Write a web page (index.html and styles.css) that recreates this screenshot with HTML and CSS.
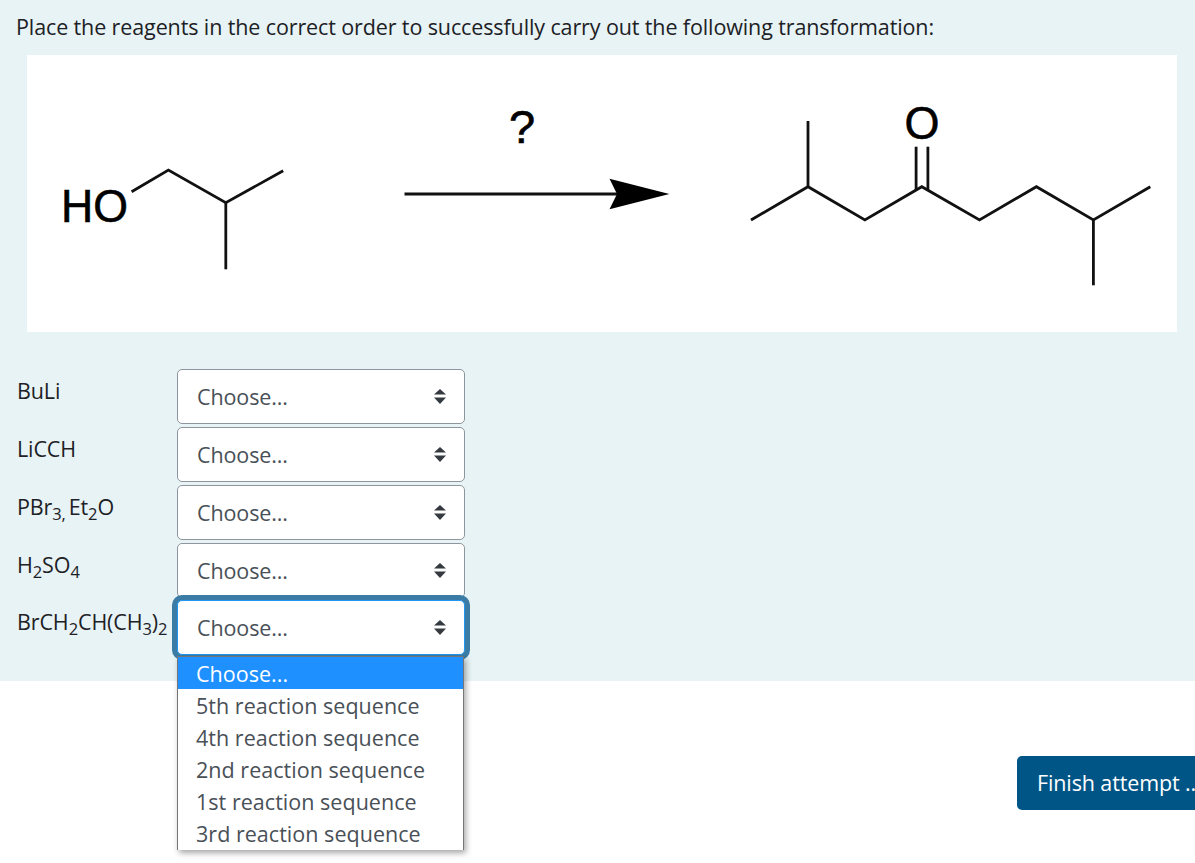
FILE: index.html
```html
<!DOCTYPE html>
<html lang="en">

<head>
    <meta charset="UTF-8">
    <title>Place the reagents</title>
    <link rel="stylesheet" href="styles.css">
</head>

<body>
    <div class="que">
        <p class="qtext">Place the reagents in the correct order to successfully carry out the following transformation:</p>

        <div class="pic">
            <svg class="scheme" viewBox="27 55 1150 277" width="1150" height="277">
                <text class="atom" x="61" y="222" textLength="67" lengthAdjust="spacingAndGlyphs">HO</text>
                <polyline class="bond" points="131.6,191.7 168.4,170 225.8,202.7 283.2,170.7"></polyline>
                <line class="bond" x1="225.8" y1="202.7" x2="225.8" y2="269.3"></line>

                <text class="atom" x="509" y="143">?</text>
                <line class="bond" x1="404.5" y1="194" x2="620" y2="194"></line>
                <polygon class="head" points="669.4,194 609.5,178.7 617,194 609.5,209.3"></polygon>

                <text class="atom" x="904.5" y="139" textLength="35" lengthAdjust="spacingAndGlyphs">O</text>
                <polyline class="bond" points="751,220 808,186.7 864.9,220 921.8,186.7 979.5,220 1036.4,186.7 1093.4,220 1150.3,186.7"></polyline>
                <line class="bond" x1="808" y1="186.7" x2="808" y2="121"></line>
                <line class="bond" x1="1093.4" y1="220" x2="1093.4" y2="285.3"></line>
                <line class="bond" x1="916.1" y1="190" x2="916.1" y2="146.7"></line>
                <line class="bond" x1="927.9" y1="190" x2="927.9" y2="146.7"></line>
            </svg>
        </div>

        <div class="rows">
            <div class="row">
                <div class="lbl">BuLi</div>
                <div class="sel">Choose...
                    <svg class="updown" viewBox="0 0 12 15"><path d="M6 0L0 5.5h12zM6 15L0 8.5h12z"></path></svg>
                </div>
            </div>
            <div class="row">
                <div class="lbl">LiCCH</div>
                <div class="sel">Choose...
                    <svg class="updown" viewBox="0 0 12 15"><path d="M6 0L0 5.5h12zM6 15L0 8.5h12z"></path></svg>
                </div>
            </div>
            <div class="row">
                <div class="lbl">PBr<sub>3,</sub> Et<sub>2</sub>O</div>
                <div class="sel">Choose...
                    <svg class="updown" viewBox="0 0 12 15"><path d="M6 0L0 5.5h12zM6 15L0 8.5h12z"></path></svg>
                </div>
            </div>
            <div class="row">
                <div class="lbl">H<sub>2</sub>SO<sub>4</sub></div>
                <div class="sel">Choose...
                    <svg class="updown" viewBox="0 0 12 15"><path d="M6 0L0 5.5h12zM6 15L0 8.5h12z"></path></svg>
                </div>
            </div>
            <div class="row last">
                <div class="lbl">BrCH<sub>2</sub>CH(CH<sub>3</sub>)<sub>2</sub></div>
                <div class="sel open">Choose...
                    <svg class="updown" viewBox="0 0 12 15"><path d="M6 0L0 5.5h12zM6 15L0 8.5h12z"></path></svg>
                    <ul class="menu">
                        <li class="on">Choose...</li>
                        <li>5th reaction sequence</li>
                        <li>4th reaction sequence</li>
                        <li>2nd reaction sequence</li>
                        <li>1st reaction sequence</li>
                        <li>3rd reaction sequence</li>
                    </ul>
                </div>
            </div>
        </div>
    </div>

    <div class="foot">
        <button class="btn" type="button">Finish attempt ...</button>
    </div>
</body>

</html>
```

FILE: styles.css
```css
html,
body {
    height: 863px;
    overflow: hidden;
}

body {
    margin: 0;
    background: #fff;
    color: #1d2125;
    font-family: "Open Sans", "Noto Sans", sans-serif;
    font-size: 21.5px;
    letter-spacing: -0.115px;
}

/* question panel */
.que {
    height: 681px;
    padding: 10px 16px 0;
    box-sizing: border-box;
    background: #e7f3f5;
}

.qtext {
    margin: 0;
    height: 34px;
    line-height: 34px;
}

/* reaction picture */
.pic {
    width: 1150px;
    height: 277px;
    margin: 11px 0 0 11px;
    background: #fff;
}

.scheme {
    display: block;
}

.atom {
    font-family: "Liberation Sans", sans-serif;
    font-size: 47px;
    letter-spacing: 0;
    fill: #000;
    stroke: #000;
    stroke-width: 0.6;
}

.bond {
    fill: none;
    stroke: #111;
    stroke-width: 2.8;
}

.head {
    fill: #000;
}

/* reagent rows */
.rows {
    margin-top: 37px;
}

.row {
    display: flex;
    height: 58px;
}

.row.last {
    margin-top: -1px;
}

.lbl {
    width: 160px;
    padding-left: 1px;
    line-height: 44px;
    word-spacing: -2.5px;
    white-space: nowrap;
}

.lbl sub {
    font-size: 16.5px;
    line-height: 0;
}

.sel {
    position: relative;
    display: flex;
    align-items: center;
    justify-content: space-between;
    box-sizing: border-box;
    width: 288px;
    height: 55px;
    padding: 0 18px 0 19px;
    background: #fff;
    border: 1px solid #8f959e;
    border-radius: 5px;
    color: #495057;
}

.updown {
    width: 12px;
    height: 15px;
    fill: #343a40;
}

/* focused one */
.sel.open {
    border-color: #2196f3;
    box-shadow: 0 0 0 5px #3a7ca5;
}

/* open list over the page */
.menu {
    position: absolute;
    top: 55px;
    left: -1px;
    width: 287px;
    height: 194px;
    margin: 0;
    padding: 0;
    box-sizing: border-box;
    list-style: none;
    overflow: hidden;
    background: #fff;
    border: 1px solid #767676;
    border-bottom: 0;
    box-shadow: 2px 3px 6px rgba(0, 0, 0, 0.35);
    letter-spacing: 0.03px;
}

.menu li {
    height: 32px;
    padding-left: 18px;
    line-height: 34px;
    white-space: nowrap;
}

.menu .on {
    background: #1e90ff;
    color: #fff;
}

/* footer button */
.foot {
    margin: 75px 0 0 1017px;
}

.btn {
    height: 54px;
    padding: 0 20px 2px;
    border: 0;
    border-radius: 5px;
    background: #005587;
    color: #fff;
    font: inherit;
    letter-spacing: inherit;
    white-space: nowrap;
}
```
